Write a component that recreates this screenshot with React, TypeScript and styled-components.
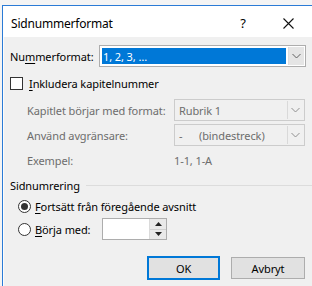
import React from "react";
import styled, { createGlobalStyle } from "styled-components";

const Global = createGlobalStyle`
  html, body { margin: 0; padding: 0; background: #f4f4f4; }
  body { font-family: "Noto Sans", "Open Sans", sans-serif; font-size: 11px; letter-spacing: -0.1px; color: #000; }
`;

const Screen = styled.div`
  width: 312px;
  height: 286px;
  overflow: hidden;
  padding: 5px 0 0 2px;
  box-sizing: border-box;
`;

const Dialog = styled.div`
  width: 320px;
  height: 290px;
  border-left: 1px solid #2b7bd6;
  border-top: 1px solid #2b7bd6;
  background: #f0f0f0;
  display: flex;
  flex-direction: column;
`;

const TitleBar = styled.div`
  height: 31px;
  box-sizing: border-box;
  padding: 3px 0 0 8px;
  background: #fff;
  display: flex;
  align-items: center;
  flex-shrink: 0;
`;

const Title = styled.div`
  flex: 1;
  font-size: 12px;
  letter-spacing: -0.2px;
`;

const TitleButton = styled.div<{ $w: number }>`
  width: ${(p) => p.$w}px;
  height: 28px;
  display: flex;
  align-items: center;
  justify-content: center;
  font-size: 13px;
`;

const Body = styled.div`
  flex: 1;
  padding: 8px 0 0 6px;
  border-left: 1px solid #fcfcfc;
  display: flex;
  flex-direction: column;
`;

const Row = styled.div<{ $h: number; $mt?: number; $indent?: number }>`
  height: ${(p) => p.$h}px;
  margin-top: ${(p) => p.$mt ?? 0}px;
  padding-left: ${(p) => p.$indent ?? 0}px;
  display: flex;
  align-items: center;
`;

const Label = styled.div<{ $w?: number; $disabled?: boolean }>`
  width: ${(p) => (p.$w ? `${p.$w}px` : "auto")};
  color: ${(p) => (p.$disabled ? "#6d6d6d" : "#000")};
  white-space: nowrap;
  flex-shrink: 0;
`;

const Combo = styled.div<{ $w: number; $disabled?: boolean }>`
  width: ${(p) => p.$w}px;
  height: 22px;
  box-sizing: border-box;
  border: 1px solid ${(p) => (p.$disabled ? "#cccccc" : "#adadad")};
  background: ${(p) => (p.$disabled ? "#f0f0f0" : "#fff")};
  display: flex;
  align-items: stretch;
`;

const ComboValue = styled.div<{ $selected?: boolean; $disabled?: boolean }>`
  flex: 1;
  margin: ${(p) => (p.$selected ? "2px 1px 2px 2px" : "0")};
  padding-left: ${(p) => (p.$selected ? "1px" : "4px")};
  background: ${(p) => (p.$selected ? "#0078d7" : "transparent")};
  color: ${(p) => (p.$selected ? "#fff" : p.$disabled ? "#6d6d6d" : "#000")};
  display: flex;
  align-items: center;
  white-space: pre;
`;

const ComboArrow = styled.div<{ $disabled?: boolean }>`
  width: 16px;
  margin: 1px;
  box-sizing: border-box;
  background: ${(p) => (p.$disabled ? "#f0f0f0" : "#e5e5e5")};
  border-left: 1px solid ${(p) => (p.$disabled ? "#d9d9d9" : "#dcdcdc")};
  display: flex;
  align-items: center;
  justify-content: center;
`;

const Check = styled.div`
  width: 13px;
  height: 13px;
  box-sizing: border-box;
  border: 1px solid #333;
  background: #fff;
  margin-right: 6px;
`;

const Radio = styled.div<{ $checked?: boolean }>`
  width: 13px;
  height: 13px;
  box-sizing: border-box;
  border: 1px solid #333;
  border-radius: 50%;
  background: #fff;
  margin-right: 4px;
  display: flex;
  align-items: center;
  justify-content: center;
  &::after {
    content: "";
    display: ${(p) => (p.$checked ? "block" : "none")};
    width: 7px;
    height: 7px;
    border-radius: 50%;
    background: #333;
  }
`;

const U = styled.span`
  text-decoration: underline;
  text-underline-offset: 2px;
`;

const GroupHeader = styled.div`
  height: 16px;
  margin-top: 9px;
  display: flex;
  align-items: center;
  gap: 6px;
  &::after {
    content: "";
    flex: 1;
    height: 1px;
    background: #dcdcdc;
    margin-right: 7px;
  }
`;

const Spin = styled.div`
  width: 65px;
  height: 22px;
  box-sizing: border-box;
  border: 1px solid #adadad;
  background: #fff;
  display: flex;
  justify-content: flex-end;
  margin-left: 12px;
`;

const SpinButtons = styled.div`
  width: 16px;
  display: flex;
  flex-direction: column;
  border-left: 1px solid #dadada;
`;

const SpinBtn = styled.div`
  flex: 1;
  background: #e9e9e9;
  display: flex;
  align-items: center;
  justify-content: center;
  & + & { border-top: 1px solid #d0d0d0; }
`;

const Footer = styled.div`
  display: flex;
  justify-content: flex-end;
  gap: 11px;
  margin-top: 16px;
  width: 295px;
`;

const Button = styled.div<{ $default?: boolean }>`
  width: ${(p) => (p.$default ? 73 : 74)}px;
  height: ${(p) => (p.$default ? 24 : 22)}px;
  margin-top: ${(p) => (p.$default ? 0 : 1)}px;
  box-sizing: border-box;
  border: ${(p) => (p.$default ? "2px solid #0078d7" : "1px solid #adadad")};
  background: #e1e1e1;
  display: flex;
  align-items: center;
  justify-content: center;
`;

const Chevron = ({ color = "#606060" }: { color?: string }) => (
  <svg width="9" height="6" viewBox="0 0 9 6">
    <path d="M0.5 1 L4.5 5 L8.5 1" fill="none" stroke={color} strokeWidth="1" />
  </svg>
);

const Tri = ({ up }: { up?: boolean }) => (
  <svg width="7" height="4" viewBox="0 0 7 4">
    <path d={up ? "M0 4 L3.5 0 L7 4 Z" : "M0 0 L3.5 4 L7 0 Z"} fill="#222" />
  </svg>
);

export default function App() {
  return (
    <>
      <Global />
      <Screen>
        <Dialog>
          <TitleBar>
            <Title>Sidnummerformat</Title>
            <TitleButton $w={44}>?</TitleButton>
            <TitleButton $w={46} style={{ marginRight: 12 }}>
              <svg width="11" height="11" viewBox="0 0 11 11">
                <path d="M0.5 0.5 L10.5 10.5 M10.5 0.5 L0.5 10.5" stroke="#111" strokeWidth="1.1" />
              </svg>
            </TitleButton>
          </TitleBar>
          <Body>
            <Row $h={22}>
              <Label $w={89}>
                Nu<U>m</U>merformat:
              </Label>
              <Combo $w={207}>
                <ComboValue $selected>1, 2, 3, …</ComboValue>
                <ComboArrow>
                  <Chevron />
                </ComboArrow>
              </Combo>
            </Row>
            <Row $h={14} $mt={9}>
              <Check />
              <Label>
                <U>I</U>nkludera kapitelnummer
              </Label>
            </Row>
            <Row $h={22} $mt={9} $indent={17}>
              <Label $w={147} $disabled>
                Kapitlet börjar med format:
              </Label>
              <Combo $w={131} $disabled>
                <ComboValue $disabled>Rubrik 1</ComboValue>
                <ComboArrow $disabled>
                  <Chevron color="#909090" />
                </ComboArrow>
              </Combo>
            </Row>
            <Row $h={22} $mt={3} $indent={17}>
              <Label $w={147} $disabled>
                Använd avgränsare:
              </Label>
              <Combo $w={131} $disabled>
                <ComboValue $disabled>{"-      (bindestreck)"}</ComboValue>
                <ComboArrow $disabled>
                  <Chevron color="#909090" />
                </ComboArrow>
              </Combo>
            </Row>
            <Row $h={16} $mt={6} $indent={17}>
              <Label $w={147} $disabled>
                Exempel:
              </Label>
              <Label $disabled>1-1, 1-A</Label>
            </Row>
            <GroupHeader>Sidnumrering</GroupHeader>
            <Row $h={16} $mt={5} $indent={8}>
              <Radio $checked />
              <Label>
                <U>F</U>ortsätt från föregående avsnitt
              </Label>
            </Row>
            <Row $h={22} $mt={4} $indent={8}>
              <Radio />
              <Label>
                <U>B</U>örja med:
              </Label>
              <Spin>
                <SpinButtons>
                  <SpinBtn>
                    <Tri up />
                  </SpinBtn>
                  <SpinBtn>
                    <Tri />
                  </SpinBtn>
                </SpinButtons>
              </Spin>
            </Row>
            <Footer>
              <Button $default>OK</Button>
              <Button>Avbryt</Button>
            </Footer>
          </Body>
        </Dialog>
      </Screen>
    </>
  );
}
